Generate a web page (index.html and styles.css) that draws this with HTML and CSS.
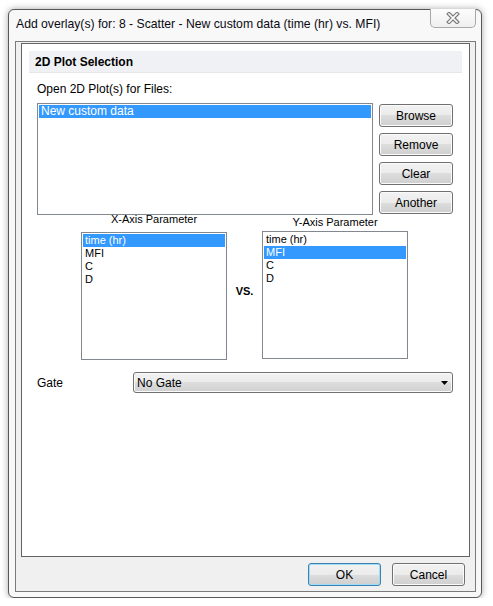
FILE: index.html
```html
<!DOCTYPE html>
<html lang="en">
<head>
    <meta charset="UTF-8">
    <title>Add overlay(s)</title>
    <link rel="stylesheet" href="styles.css">
</head>
<body>
    <div class="window">
        <div class="titlebar">
            <span class="title">Add overlay(s) for: 8 - Scatter - New custom data (time (hr) vs. MFI)</span>
            <div class="close-btn">
                <svg width="14" height="12" viewBox="0 0 14 12">
                    <path d="M3 2 L11 10 M11 2 L3 10" stroke="#7c7c7c" stroke-width="4" stroke-linecap="square"/>
                    <path d="M3 2 L11 10 M11 2 L3 10" stroke="#fdfdfd" stroke-width="1.6" stroke-linecap="square"/>
                </svg>
            </div>
        </div>
        <div class="frame">
            <div class="panel">
                <div class="section-head">2D Plot Selection</div>
                <div class="field-label">Open 2D Plot(s) for Files:</div>
                <div class="files-row">
                    <div class="listbox files-list">
                        <div class="item selected">New custom data</div>
                    </div>
                    <div class="side-buttons">
                        <button class="btn">Browse</button>
                        <button class="btn">Remove</button>
                        <button class="btn">Clear</button>
                        <button class="btn">Another</button>
                    </div>
                </div>
                <div class="axis-row">
                    <div class="axis-col">
                        <div class="axis-label">X-Axis Parameter</div>
                        <div class="listbox axis-list">
                            <div class="item selected">time (hr)</div>
                            <div class="item">MFI</div>
                            <div class="item">C</div>
                            <div class="item">D</div>
                        </div>
                    </div>
                    <div class="vs">VS.</div>
                    <div class="axis-col y-col">
                        <div class="axis-label">Y-Axis Parameter</div>
                        <div class="listbox axis-list">
                            <div class="item">time (hr)</div>
                            <div class="item selected">MFI</div>
                            <div class="item">C</div>
                            <div class="item">D</div>
                        </div>
                    </div>
                </div>
                <div class="gate-row">
                    <span class="gate-label">Gate</span>
                    <div class="combo">
                        <span>No Gate</span>
                        <svg width="7" height="4" viewBox="0 0 7 4"><path d="M0 0 H7 L3.5 4 Z" fill="#000"/></svg>
                    </div>
                </div>
            </div>
            <div class="footer">
                <button class="btn default">OK</button>
                <button class="btn">Cancel</button>
            </div>
        </div>
    </div>
</body>
</html>
```

FILE: styles.css
```css
body {
    margin: 0;
    padding: 9px 0 0 8px;
    background: #fff;
    font-family: 'Liberation Sans', Arial, sans-serif;
    font-size: 12px;
    color: #000;
}

.window {
    width: 474px;
    height: 589px;
    box-sizing: border-box;
    border: 1px solid #585858;
    border-radius: 6px;
    background: #f8f8f8;
    box-shadow: 0 0 7px rgba(0,0,0,0.35);
    display: flex;
    flex-direction: column;
}

.titlebar {
    height: 31px;
    display: flex;
    justify-content: space-between;
    align-items: flex-start;
    padding-left: 7px;
    flex-shrink: 0;
}

.title {
    margin-top: 6px;
    line-height: 16px;
    font-size: 12.2px;
    color: #0a0a14;
}

.close-btn {
    width: 46px;
    height: 19px;
    box-sizing: border-box;
    margin: -1px 5px 0 0;
    border: 1px solid #a8a8a8;
    border-top: none;
    border-radius: 0 0 5px 5px;
    background: linear-gradient(#fdfdfd, #efefef);
    display: flex;
    align-items: center;
    justify-content: center;
}

.frame {
    flex: 1;
    margin: 0 5px 5px 6px;
    border: 1px solid #7a7a7a;
    background: #f0f0f0;
    padding: 1px 5px 0 5px;
    display: flex;
    flex-direction: column;
}

.panel {
    height: 514px;
    box-sizing: border-box;
    border: 1px solid #646464;
    background: #fff;
}

.section-head {
    margin: 7px 7px 0 7px;
    height: 22px;
    line-height: 22px;
    padding-left: 6px;
    background: #f0f1f4;
    border-bottom: 1px solid #e6e7ea;
    box-sizing: border-box;
    font-weight: bold;
}

.field-label {
    margin-top: 8px;
    padding-left: 15px;
    line-height: 16px;
}

.files-row {
    display: flex;
    margin-top: 6px;
    padding-left: 15px;
}

.listbox {
    border: 1px solid #828790;
    background: #fff;
    box-sizing: border-box;
    padding: 1px;
}

.files-list {
    width: 336px;
    height: 112px;
}

.item {
    height: 13px;
    line-height: 13px;
    padding-left: 2px;
    font-size: 11px;
}

.files-list .item {
    font-size: 12px;
}

.item.selected {
    background: #3399ff;
    color: #fff;
}

.side-buttons {
    display: flex;
    flex-direction: column;
    gap: 6px;
    margin: 1px 0 0 6px;
}

.btn {
    width: 74px;
    height: 23px;
    box-sizing: border-box;
    border: 1px solid #707070;
    border-radius: 3px;
    background: linear-gradient(#f2f2f2 0%, #ebebeb 50%, #dddddd 50%, #cfcfcf 100%);
    box-shadow: inset 0 0 0 1px #fbfbfb;
    font-family: inherit;
    font-size: 12px;
    color: #000;
    padding: 0;
}

.axis-row {
    display: flex;
    margin-top: -2px;
    padding-left: 59px;
}

.axis-col {
    width: 146px;
}

.axis-label {
    height: 19px;
    line-height: 13px;
    font-size: 11px;
    text-align: center;
}

.y-col .axis-label {
    height: 18px;
    padding-top: 3px;
    box-sizing: border-box;
}

.axis-list {
    height: 128px;
}

.vs {
    width: 35px;
    margin-top: 72px;
    line-height: 13px;
    font-size: 11px;
    font-weight: bold;
    text-align: center;
}

.gate-row {
    display: flex;
    align-items: center;
    margin-top: 12px;
    padding-left: 15px;
}

.gate-label {
    width: 96px;
}

.combo {
    width: 320px;
    height: 21px;
    box-sizing: border-box;
    border: 1px solid #707070;
    border-radius: 3px;
    background: linear-gradient(#f2f2f2 0%, #ebebeb 50%, #dddddd 50%, #cfcfcf 100%);
    box-shadow: inset 0 0 0 1px #fbfbfb;
    display: flex;
    align-items: center;
    justify-content: space-between;
    padding: 0 4px 0 3px;
}

.footer {
    display: flex;
    justify-content: flex-end;
    gap: 11px;
    padding: 6px 5px 5px 0;
}

.footer .btn {
    width: 73px;
}

.btn.default {
    border-color: #3c7fb1;
    box-shadow: inset 0 0 0 1px #9fdcf5;
}
```
